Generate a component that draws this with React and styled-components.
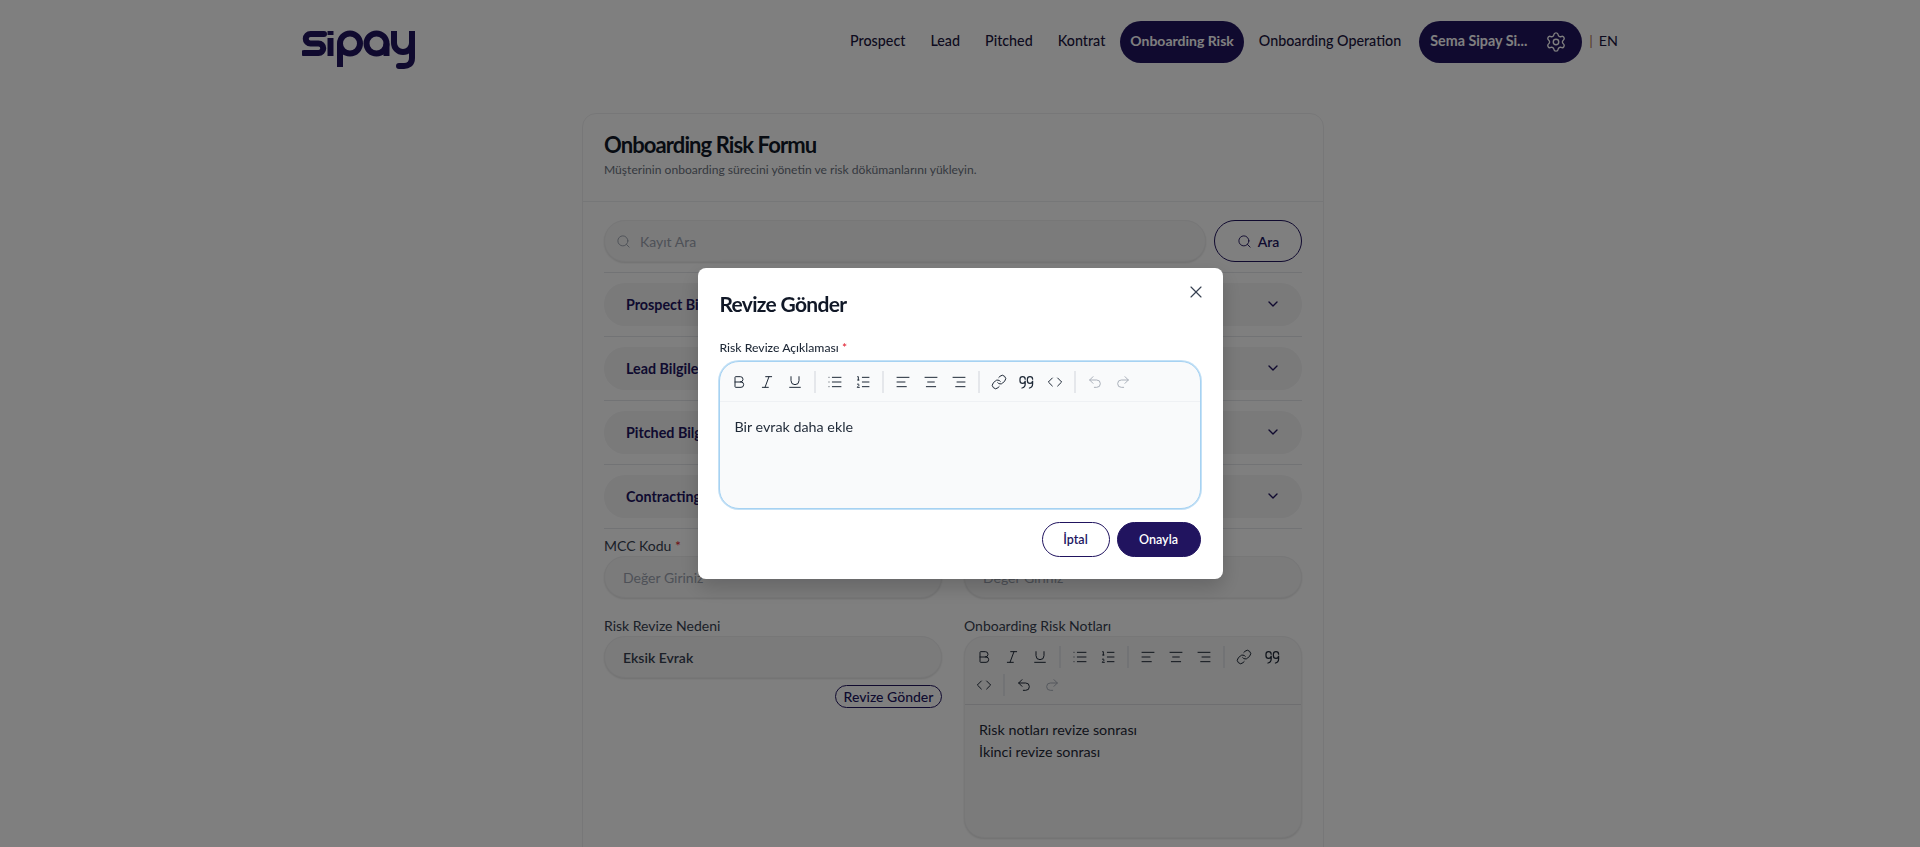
import React from 'react';
import styled, { createGlobalStyle } from 'styled-components';
import {
  Bold,
  ChevronDown,
  Code,
  Italic,
  Link,
  List,
  ListOrdered,
  Redo2,
  Search,
  Settings,
  TextAlignCenter,
  TextAlignEnd,
  TextAlignStart,
  Underline,
  Undo2,
  X,
} from 'lucide-react';

const FONT = `Lato, "Noto Sans", sans-serif`;
const NAVY = '#21145f';

const GlobalStyle = createGlobalStyle`
  html, body { margin: 0; padding: 0; background: #fff; height: 847px; overflow: hidden; }
  body { font-family: ${FONT}; color: #1f2937; }
  * { box-sizing: border-box; }
`;

const Page = styled.div`
  height: 847px;
  overflow: hidden;
`;

const Header = styled.header`
  display: flex;
  align-items: flex-start;
  justify-content: space-between;
  padding: 21px 302px 0 302px;
  height: 113px;
`;

const LogoMark = styled.svg`
  width: 115px;
  height: 42px;
  margin-top: 8px;
`;

const Nav = styled.nav`
  display: flex;
  align-items: center;
  gap: 5px;
  height: 42px;
`;

const NavItem = styled.a`
  display: flex;
  align-items: center;
  height: 42px;
  padding: 0 10px 3px;
  border-radius: 21px;
  font-size: ${({ $active }) => ($active ? 14 : 14.3)}px;
  font-weight: ${({ $active }) => ($active ? 700 : 500)};
  color: ${({ $active }) => ($active ? '#fff' : '#1b1640')};
  background: ${({ $active }) => ($active ? NAVY : 'transparent')};
  white-space: nowrap;
`;

const UserPill = styled.div`
  display: flex;
  align-items: center;
  justify-content: space-between;
  width: 163px;
  height: 42px;
  margin-left: 3px;
  padding: 0 15px 3px 11px;
  border-radius: 21px;
  background: ${NAVY};
  color: #fff;
  font-size: 14.3px;
  font-weight: 700;
  white-space: nowrap;

  svg {
    margin-top: 3px;
  }
`;

const Lang = styled.span`
  margin-left: 2px;
  padding-bottom: 3px;
  font-size: 14.3px;
  color: #1b1640;
  white-space: nowrap;
`;

const LangBar = styled.span`
  color: #b07050;
  margin-right: 6px;
`;

const Card = styled.section`
  width: 742px;
  margin-left: 582px;
  border: 1px solid #efeff1;
  border-radius: 14px 14px 0 0;
  background: #fff;
`;

const CardHead = styled.div`
  height: 88px;
  padding: 17px 21px 0;
  border-bottom: 1px solid #eceef1;
`;

const CardTitle = styled.h1`
  margin: 0;
  font-size: 22px;
  line-height: 28px;
  font-weight: 700;
  letter-spacing: -0.9px;
  color: #111827;
`;

const CardSub = styled.p`
  margin: 3px 0 0;
  font-size: 12.1px;
  line-height: 16px;
  color: #6b7280;
`;

const CardBody = styled.div`
  padding: 18px 21px 40px;
`;

const SearchRow = styled.div`
  display: flex;
  gap: 8px;
  padding-bottom: 10px;
  border-bottom: 1px solid #e5e7eb;
`;

const SearchBox = styled.div`
  flex: 1;
  display: flex;
  align-items: center;
  gap: 9px;
  height: 42px;
  padding: 0 10px 0 11px;
  border: 1px solid #eeeeef;
  border-radius: 21px;
  background: #f6f6f7;
  box-shadow: 0 1px 2px rgba(0, 0, 0, 0.12);
  color: #9ca3af;
  font-size: 14px;
`;

const SearchButton = styled.button`
  display: flex;
  align-items: center;
  justify-content: center;
  gap: 6px;
  width: 88px;
  height: 42px;
  border: 1px solid ${NAVY};
  border-radius: 21px;
  background: #fff;
  color: ${NAVY};
  font: 600 14px ${FONT};
`;

const AccordionRow = styled.div`
  padding: 10px 0;
  border-bottom: 1px solid #e5e7eb;
`;

const AccordionHead = styled.div`
  display: flex;
  align-items: center;
  justify-content: space-between;
  height: 43px;
  padding: 0 21px 1px 22px;
  border-radius: 21px;
  background: #f4f4f5;
  color: ${NAVY};
  font-size: 14.3px;
  font-weight: 700;
`;

const FormGrid = styled.div`
  display: grid;
  grid-template-columns: 338px 338px;
  column-gap: 22px;
  padding-top: 8px;
`;

const Column = styled.div`
  display: flex;
  flex-direction: column;
`;

const FieldLabel = styled.label`
  display: block;
  font-size: 14px;
  line-height: 18px;
  color: #374151;
  margin-bottom: 1px;
`;

const Star = styled.span`
  color: #e11d2e;
`;

const Input = styled.div`
  display: flex;
  align-items: center;
  height: 42px;
  padding: 0 18px;
  border: 1px solid #eeeeef;
  border-radius: 21px;
  background: #f6f6f7;
  box-shadow: 0 1px 2px rgba(0, 0, 0, 0.12);
  font-size: 14px;
  font-weight: ${({ $filled }) => ($filled ? 600 : 400)};
  color: ${({ $filled }) => ($filled ? '#374151' : '#9ca3af')};
  margin-bottom: ${({ $gap }) => $gap || 0}px;
`;

const SmallAction = styled.button`
  align-self: flex-end;
  width: 107px;
  height: 23px;
  margin-top: 7px;
  padding: 0;
  border: 1px solid ${NAVY};
  border-radius: 12px;
  background: #fff;
  color: ${NAVY};
  font: 500 14px ${FONT};
`;

const Editor = styled.div`
  border: 1px solid ${({ $focused }) => ($focused ? '#a6d2f2' : '#eeeeef')};
  border-radius: 20px;
  background: ${({ $focused }) => ($focused ? '#f9fafb' : '#f6f6f7')};
  box-shadow: ${({ $focused }) =>
    $focused ? '0 0 0 1px #c4e1f6' : '0 1px 2px rgba(0, 0, 0, 0.12)'};
  overflow: hidden;
`;

const Toolbar = styled.div`
  display: flex;
  flex-wrap: wrap;
  align-items: center;
  row-gap: 6px;
  padding: 9px 5px 8px 5px;
  border-bottom: 1px solid ${({ $light }) => ($light ? '#eff1f4' : '#dcdde0')};
`;

const ToolIcon = styled.span`
  display: flex;
  align-items: center;
  justify-content: center;
  width: 28px;
  height: 22px;
  color: ${({ $muted }) => ($muted ? '#aab0ba' : '#1f2937')};
`;

const ToolDivider = styled.span`
  width: 2px;
  height: 22px;
  margin: 0 5px;
  background: #e5e7eb;
`;

const EditorText = styled.div`
  height: ${({ $h }) => $h}px;
  padding: 14px 14px 0 ${({ $left }) => $left}px;
  font-size: 14.3px;
  line-height: 21.5px;
  color: #1f2937;
`;

const Overlay = styled.div`
  position: fixed;
  inset: 0;
  display: flex;
  align-items: flex-start;
  justify-content: center;
  padding-top: 268px;
  background: rgba(0, 0, 0, 0.5);
`;

const Modal = styled.div`
  position: relative;
  width: 525px;
  height: 311px;
  padding: 22px 22px 0 21px;
  border-radius: 8px;
  background: #fff;
  box-shadow: 0 8px 20px rgba(0, 0, 0, 0.18);
`;

const ModalTitle = styled.h2`
  margin: 0 0 22px 1px;
  font-size: 21px;
  line-height: 28px;
  font-weight: 700;
  letter-spacing: -0.7px;
  color: #111827;
`;

const Close = styled.button`
  position: absolute;
  top: 14px;
  right: 17px;
  display: flex;
  padding: 0;
  border: 0;
  background: none;
  color: #374151;
`;

const ModalLabel = styled.label`
  display: block;
  margin: 0 0 5px 1px;
  font-size: 12.2px;
  line-height: 16px;
  font-weight: 500;
  color: #1f2937;
`;

const ModalActions = styled.div`
  display: flex;
  justify-content: flex-end;
  gap: 7px;
  margin-top: 13px;
`;

const ModalButton = styled.button`
  height: 35px;
  width: ${({ $w }) => $w}px;
  border: 1px solid ${NAVY};
  border-radius: 18px;
  background: ${({ $primary }) => ($primary ? NAVY : '#fff')};
  color: ${({ $primary }) => ($primary ? '#fff' : NAVY)};
  font: 600 12.5px ${FONT};
`;

const QuoteIcon = () => (
  <svg width="15" height="15" viewBox="0 0 15 15" fill="none" stroke="currentColor" strokeWidth="1.25" strokeLinecap="round">
    <path d="M6.2 4.2a2.6 2.6 0 0 0-5.2 0v1.6a2.6 2.6 0 0 0 5.2 0V9c0 2.2-1.2 3.6-3.2 4" />
    <path d="M13.6 4.2a2.6 2.6 0 0 0-5.2 0v1.6a2.6 2.6 0 0 0 5.2 0V9c0 2.2-1.2 3.6-3.2 4" />
  </svg>
);

const Logo = () => (
  <LogoMark viewBox="0 0 115 42" fill="none" stroke={NAVY} strokeWidth="6">
    <path d="M22 5H8.5a4.75 4.75 0 0 0 0 9.5h8a4.75 4.75 0 0 1 0 9.5H2" strokeLinecap="round" />
    <path d="M28.5 9v18" />
    <path d="M28.5 2v4" />
    <circle cx="48" cy="14.5" r="10" />
    <path d="M38 14.5V38" />
    <circle cx="74.5" cy="14.5" r="10" />
    <path d="M84.5 14.5V27" />
    <path d="M92 2v12a9 9 0 0 0 18 0V2" />
    <path d="M110 12v17c0 6-4 8-8 8h-5" strokeLinecap="round" />
  </LogoMark>
);

const ICON = { size: 16, strokeWidth: 1.5 };

const TOOL_GROUPS = [
  [
    { id: 'b', icon: <Bold {...ICON} /> },
    { id: 'i', icon: <Italic {...ICON} /> },
    { id: 'u', icon: <Underline {...ICON} /> },
  ],
  [
    { id: 'ul', icon: <List {...ICON} /> },
    { id: 'ol', icon: <ListOrdered {...ICON} /> },
  ],
  [
    { id: 'l', icon: <TextAlignStart {...ICON} /> },
    { id: 'c', icon: <TextAlignCenter {...ICON} /> },
    { id: 'r', icon: <TextAlignEnd {...ICON} /> },
  ],
  [
    { id: 'a', icon: <Link {...ICON} /> },
    { id: 'q', icon: <QuoteIcon /> },
    { id: 'code', icon: <Code {...ICON} /> },
  ],
  [
    { id: 'undo', icon: <Undo2 {...ICON} />, history: true },
    { id: 'redo', icon: <Redo2 {...ICON} />, muted: true },
  ],
];

const EditorToolbar = ({ undoEnabled, light }) => (
  <Toolbar $light={light}>
    {TOOL_GROUPS.map((group, i) => (
      <React.Fragment key={i}>
        {i > 0 && <ToolDivider />}
        {group.map(t => (
          <ToolIcon key={t.id} $muted={t.muted || (t.history && !undoEnabled)}>
            {t.icon}
          </ToolIcon>
        ))}
      </React.Fragment>
    ))}
  </Toolbar>
);

const SECTIONS = ['Prospect Bilgileri', 'Lead Bilgileri', 'Pitched Bilgileri', 'Contracting Bilgileri'];

export default function App() {
  return (
    <Page>
      <GlobalStyle />
      <Header>
        <Logo />
        <Nav>
          <NavItem>Prospect</NavItem>
          <NavItem>Lead</NavItem>
          <NavItem>Pitched</NavItem>
          <NavItem>Kontrat</NavItem>
          <NavItem $active>Onboarding Risk</NavItem>
          <NavItem>Onboarding Operation</NavItem>
          <UserPill>
            Sema Sipay Si...
            <Settings size={22} strokeWidth={1.5} />
          </UserPill>
          <Lang>
            <LangBar>|</LangBar>EN
          </Lang>
        </Nav>
      </Header>

      <Card>
        <CardHead>
          <CardTitle>Onboarding Risk Formu</CardTitle>
          <CardSub>Müşterinin onboarding sürecini yönetin ve risk dökümanlarını yükleyin.</CardSub>
        </CardHead>
        <CardBody>
          <SearchRow>
            <SearchBox>
              <Search size={15} strokeWidth={1.5} />
              Kayıt Ara
            </SearchBox>
            <SearchButton>
              <Search size={15} strokeWidth={1.5} />
              Ara
            </SearchButton>
          </SearchRow>
          {SECTIONS.map(s => (
            <AccordionRow key={s}>
              <AccordionHead>
                {s}
                <ChevronDown size={16} color={NAVY} />
              </AccordionHead>
            </AccordionRow>
          ))}
          <FormGrid>
            <Column>
              <FieldLabel>
                MCC Kodu <Star>*</Star>
              </FieldLabel>
              <Input $gap={19}>Değer Giriniz</Input>
              <FieldLabel>Risk Revize Nedeni</FieldLabel>
              <Input $filled>Eksik Evrak</Input>
              <SmallAction>Revize Gönder</SmallAction>
            </Column>
            <Column>
              <FieldLabel>
                MCC Açıklaması <Star>*</Star>
              </FieldLabel>
              <Input $gap={19}>Değer Giriniz</Input>
              <FieldLabel>Onboarding Risk Notları</FieldLabel>
              <Editor>
                <EditorToolbar undoEnabled />
                <EditorText $h={132} $left={14}>
                  Risk notları revize sonrası
                  <br />
                  İkinci revize sonrası
                </EditorText>
              </Editor>
            </Column>
          </FormGrid>
        </CardBody>
      </Card>

      <Overlay>
        <Modal>
          <ModalTitle>Revize Gönder</ModalTitle>
          <Close>
            <X size={20} strokeWidth={1.4} />
          </Close>
          <ModalLabel>
            Risk Revize Açıklaması <Star>*</Star>
          </ModalLabel>
          <Editor $focused>
            <EditorToolbar light />
            <EditorText $h={106} $left={15}>
              Bir evrak daha ekle
            </EditorText>
          </Editor>
          <ModalActions>
            <ModalButton $w={68}>İptal</ModalButton>
            <ModalButton $w={84} $primary>
              Onayla
            </ModalButton>
          </ModalActions>
        </Modal>
      </Overlay>
    </Page>
  );
}
